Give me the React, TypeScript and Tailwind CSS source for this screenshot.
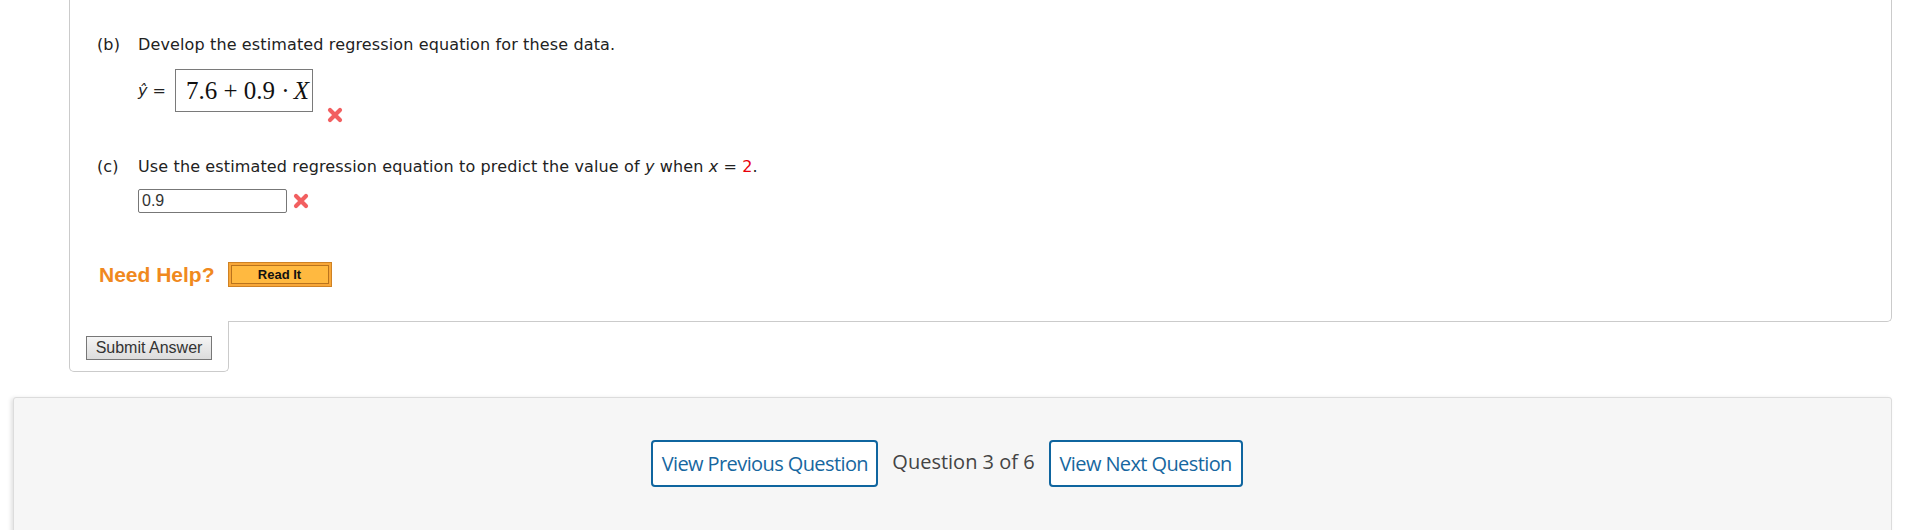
import React from 'react';

const WrongMark: React.FC<{ className?: string }> = ({ className }) => (
    <svg viewBox="0 0 16 16" width={16} height={16} className={className}>
        <path d="M3 3 L13 13 M13 3 L3 13" stroke="#f25f60" strokeWidth={4.2} strokeLinecap="round" />
    </svg>
);

const NavButton: React.FC<{ label: string; width: string }> = ({ label, width }) => (
    <button className={`${width} h-[47px] border-2 border-[#0f659f] rounded-[4px] bg-white text-[#1767a0] text-[20px] tracking-[-0.6px] whitespace-nowrap font-['Open_Sans',sans-serif]`}>
        {label}
    </button>
);

export default function App() {
    return (
        <div className="w-full h-[530px] bg-white overflow-hidden font-['DejaVu_Sans',Verdana,sans-serif] text-[#222]">
            {/* question panel */}
            <div className="ml-[69px] w-[1823px]">
                <div className="border-l border-r border-b border-[#cbcbcb] rounded-br-[5px] h-[322px] pl-[27px] pt-[33px]">
                    <div className="flex text-[16px] leading-[24px] tracking-[0.13px]">
                        <span className="w-[41px]">(b)</span>
                        <span>Develop the estimated regression equation for these data.</span>
                    </div>
                    <div className="flex items-start ml-[41px] mt-[12px]">
                        <span className="text-[16px] leading-[24px] mt-[10px] mr-[9px] whitespace-nowrap">
                            <i>ŷ</i> =
                        </span>
                        <div className="w-[138px] h-[43px] shrink-0 border border-[#7a7a7a] flex items-center pl-[10px] text-[25px] whitespace-nowrap font-['Liberation_Serif',serif] text-[#111]">
                            7.6 + 0.9 · <i className="ml-[4px]">X</i>
                        </div>
                        <WrongMark className="ml-[14px] mt-[38px] shrink-0" />
                    </div>

                    <div className="flex text-[16px] leading-[24px] mt-[32px] tracking-[0.13px]">
                        <span className="w-[41px]">(c)</span>
                        <span>
                            Use the estimated regression equation to predict the value of <i>y</i> when <i>x</i> ={' '}
                            <span className="text-[#e8000b]">2</span>.
                        </span>
                    </div>
                    <div className="flex items-center ml-[41px] mt-[10px]">
                        <div className="w-[149px] h-[24px] border border-[#777] rounded-[2px] px-[3px] text-[16px] leading-[22px] font-['Liberation_Sans',Arial,sans-serif] text-[#333]">
                            0.9
                        </div>
                        <WrongMark className="ml-[6px]" />
                    </div>

                    <div className="flex items-center mt-[49px] ml-[2px]">
                        <span className="text-[#f0891e] text-[21px] leading-[24px] font-bold font-['Liberation_Sans',Arial,sans-serif]">
                            Need Help?
                        </span>
                        <div className="ml-[13px] w-[104px] h-[25px] border border-[#cf8224] bg-[#f8a738] p-[2px]">
                            <div className="h-full border border-[#b9731d] bg-[#ffb940] flex items-center justify-center text-[13px] font-bold text-[#111] font-['Liberation_Sans',Arial,sans-serif]">
                                Read It
                            </div>
                        </div>
                    </div>
                </div>
                <div className="-mt-px w-[160px] h-[51px] bg-white border-l border-r border-b border-[#cbcbcb] rounded-b-[5px] pl-[16px] pt-[15px]">
                    <button className="w-[126px] h-[24px] border border-[#777] bg-gradient-to-b from-[#f5f5f5] to-[#dcdcdc] text-[16px] leading-[22px] text-[#333] font-['Liberation_Sans',Arial,sans-serif]">
                        Submit Answer
                    </button>
                </div>
            </div>

            {/* navigation */}
            <div className="ml-[13px] mt-[25px] w-[1879px] h-[140px] bg-[#f6f6f6] border border-[#dcdcdc] rounded-t-[3px] shadow-[-2px_1px_4px_rgba(0,0,0,0.12)] flex items-start justify-center pt-[42px] pr-[11px]">
                <NavButton label="View Previous Question" width="w-[227px]" />
                <span className="mx-[14px] mt-[7px] text-[20px] leading-[30px] text-[#444] whitespace-nowrap font-['Open_Sans',sans-serif]">Question 3 of 6</span>
                <NavButton label="View Next Question" width="w-[194px]" />
            </div>
        </div>
    );
}
